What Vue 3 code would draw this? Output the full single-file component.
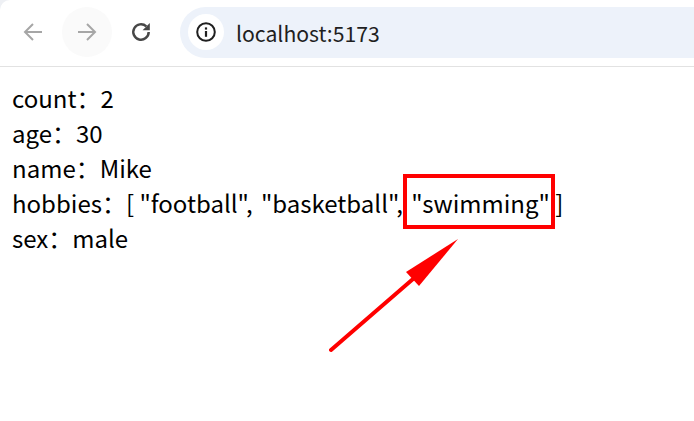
<script setup>
const rows = [
  { label: 'count', value: '2' },
  { label: 'age', value: '30' },
  { label: 'name', value: 'Mike' },
  { label: 'hobbies', value: 'list' },
  { label: 'sex', value: 'male' }
]
</script>

<template>
  <div class="page">
    <div class="toolbar_wrap">
      <div class="toolbar">
        <button class="nav_btn">
          <svg width="24" height="24" viewBox="0 0 24 24" fill="none" stroke="#a6a6a6" stroke-width="2">
            <path d="M21 12H4M12 4l-8 8 8 8" />
          </svg>
        </button>
        <button class="nav_btn nav_hover">
          <svg width="24" height="24" viewBox="0 0 24 24" fill="none" stroke="#a6a6a6" stroke-width="2">
            <path d="M3 12h17M12 4l8 8-8 8" />
          </svg>
        </button>
        <button class="nav_btn">
          <svg width="24" height="24" viewBox="0 0 24 24" fill="none" stroke="#474747" stroke-width="2.5">
            <path d="M19.7 12a7.7 7.7 0 1 1-2.4-5.6" />
            <path d="M20.8 3v7.2h-7.2z" fill="#474747" stroke="none" />
          </svg>
        </button>
        <div class="address">
          <span class="info_badge">
            <svg width="20" height="20" viewBox="0 0 20 20" fill="none">
              <circle cx="10" cy="10" r="8.8" stroke="#1f1f1f" stroke-width="2" />
              <rect x="8.9" y="9" width="2.2" height="5.8" fill="#1f1f1f" />
              <rect x="8.9" y="5.4" width="2.2" height="2.2" fill="#1f1f1f" />
            </svg>
          </span>
          <span class="url">localhost:5173</span>
        </div>
      </div>
    </div>

    <div class="content">
      <div v-for="row in rows" :key="row.label" class="row">
        <span>{{ row.label }}：</span>
        <template v-if="row.value === 'list'">
          <span class="list"><span class="bracket">[ </span>"football", "basketball", <span class="marked">"swimming"</span><span class="bracket"> ]</span></span>
        </template>
        <span v-else>{{ row.value }}</span>
      </div>

      <svg class="arrow" width="140" height="120" viewBox="0 0 140 120">
        <line x1="2" y1="111" x2="84" y2="40" stroke="#ff0000" stroke-width="4" stroke-linecap="round" />
        <polygon points="129,0 77,33 90,47" fill="#ff0000" />
      </svg>
    </div>
  </div>
</template>

<style scoped>
.page {
  width: 694px;
  height: 421px;
  overflow: hidden;
  background: #fff;
  font-family: "Noto Sans CJK SC", "Noto Sans", sans-serif;
}

.toolbar_wrap {
  background: #eef0f4;
}

.toolbar {
  display: flex;
  align-items: center;
  height: 64px;
  padding-left: 8px;
  padding-bottom: 2px;
  border-bottom: 1px solid #e2e2e2;
  border-top-left-radius: 10px;
  background: #fff;
}

.nav_btn {
  display: flex;
  align-items: center;
  justify-content: center;
  width: 50px;
  height: 50px;
  padding: 0;
  margin-right: 4px;
  border: none;
  border-radius: 50%;
  background: transparent;
}

.nav_hover {
  background: #fafafa;
}

.address {
  display: flex;
  align-items: center;
  flex: 1;
  height: 51px;
  margin-left: 10px;
  margin-right: -30px;
  padding-left: 8px;
  border-radius: 26px;
  background: #edf2fa;
}

.info_badge {
  display: flex;
  align-items: center;
  justify-content: center;
  width: 36px;
  height: 36px;
  border-radius: 50%;
  background: #fff;
}

.url {
  margin-left: 12px;
  font-size: 21.2px;
  color: #1f1f1f;
}

.content {
  position: relative;
  padding: 13px 12px 0;
  font-size: 24px;
  line-height: 35px;
  color: #000;
}

.row {
  display: flex;
  white-space: pre;
}

.list {
  word-spacing: 3px;
}

.bracket {
  word-spacing: 0;
}

.marked {
  position: relative;
}

.marked::after {
  content: '';
  position: absolute;
  top: -11px;
  right: -5px;
  bottom: -9px;
  left: -8px;
  border: 4px solid #ff0000;
}

.arrow {
  position: absolute;
  left: 329px;
  top: 172px;
}
</style>
